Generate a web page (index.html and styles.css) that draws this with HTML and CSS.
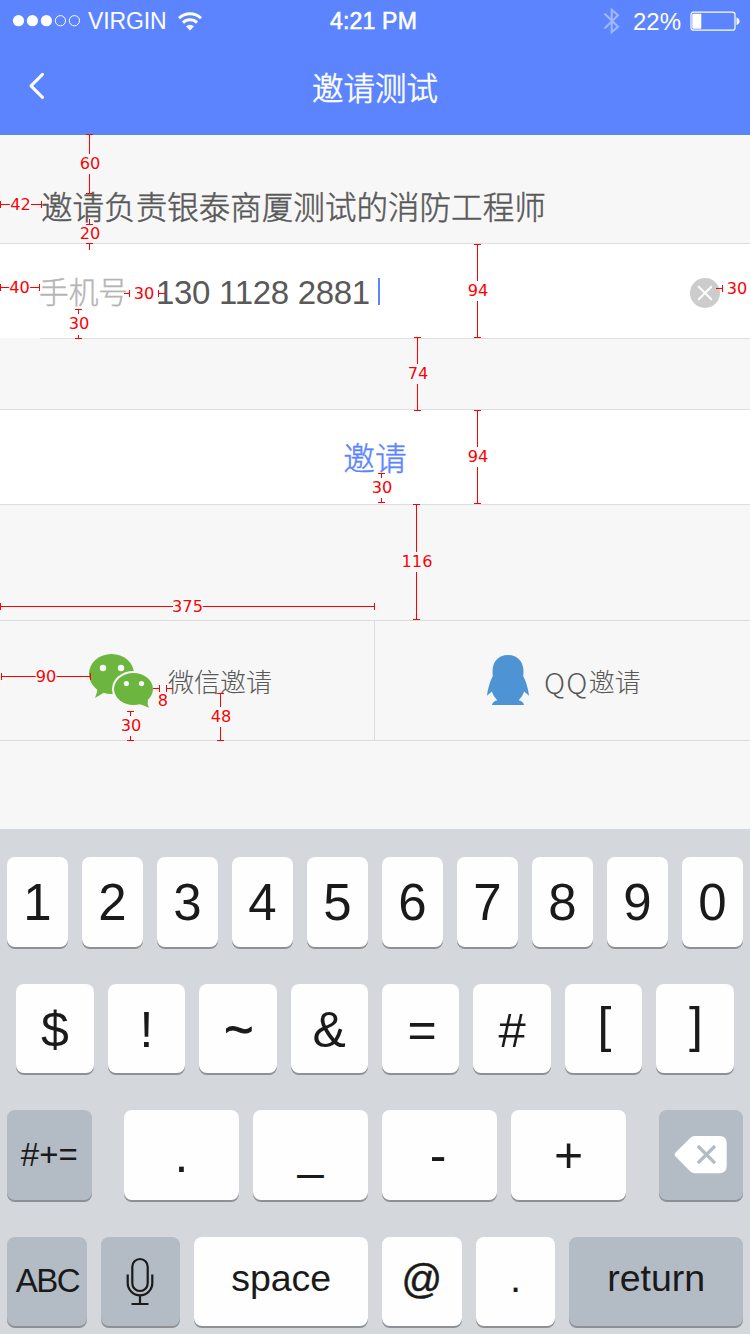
FILE: index.html
```html
<!DOCTYPE html>
<html lang="zh-CN">
<head>
<meta charset="utf-8">
<title>邀请测试</title>
<link rel="stylesheet" href="styles.css">
</head>
<body>
<main class="screen">
  <header class="header">
    <div class="status">
      <div class="status-left">
        <svg class="signal" width="70" height="14" viewBox="0 0 70 14"><g fill="#fff"><circle cx="6.5" cy="6.7" r="5.6"/><circle cx="20.4" cy="6.7" r="5.6"/><circle cx="34.4" cy="6.7" r="5.6"/></g><g fill="none" stroke="#fff"><circle cx="48.4" cy="6.7" r="5.1"/><circle cx="62.4" cy="6.7" r="5.1"/></g></svg>
        <span class="carrier">VIRGIN</span>
        <svg class="wifi" width="24" height="19" viewBox="0 0 24 19"><g fill="none" stroke="#fff" stroke-width="2.9"><path d="M1 6.2A15.8 15.8 0 0 1 23 6.2"/><path d="M5 10.6A10 10 0 0 1 19 10.6"/></g><path d="M8 14.3Q12 11.2 16 14.3L12 18.5Z" fill="#fff"/></svg>
      </div>
      <div class="clock">4:21 PM</div>
      <div class="status-right">
        <svg class="bluetooth" width="17" height="28" viewBox="0 0 17 28"><path d="M1.5 6.5L15 19.8L8.7 25.3V2.7L15 8.2L1.5 21.5" fill="none" stroke="#fff" stroke-width="2.1"/></svg>
        <span class="percent">22%</span>
        <svg class="battery" width="50" height="20" viewBox="0 0 50 20"><rect x="1" y="1.2" width="44" height="18" rx="2.5" fill="none" stroke="#fff" stroke-width="1.2"/><rect x="2.3" y="2.7" width="9" height="15" rx="1" fill="#fff"/><path d="M46.5 6.5Q49.5 7.5 49.5 10.2T46.5 14Z" fill="#fff"/></svg>
      </div>
    </div>
    <nav class="navbar">
      <svg class="back" width="18" height="28" viewBox="0 0 18 28"><path d="M14.5 2.4L3 13.9L14.5 25.4" fill="none" stroke="#fff" stroke-width="3" stroke-linecap="round" stroke-linejoin="round"/></svg>
      <h1 class="title">邀请测试</h1>
    </nav>
  </header>

  <p class="prompt">邀请负责银泰商厦测试的消防工程师</p>

  <section class="field">
    <span class="field-label">手机号</span>
    <span class="field-value">130 1128 2881</span>
    <span class="caret"></span>
    <svg class="clear" width="30" height="30" viewBox="0 0 30 30"><circle cx="15" cy="15" r="15" fill="#ccc"/><path d="M8.7 8.7L21.3 21.3M21.3 8.7L8.7 21.3" stroke="#fff" stroke-width="2" stroke-linecap="round"/></svg>
  </section>
  <div class="field-rule"></div>

  <button class="invite">邀请</button>

  <section class="share">
    <div class="share-item wechat">
      <svg width="66" height="56" viewBox="88 653 66 56">
        <g fill="#6cb53e"><ellipse cx="111.5" cy="674" rx="22.5" ry="20"/><path d="M97.5 687Q97.8 692 95 698L105 692Z"/></g>
        <ellipse cx="133.5" cy="689" rx="21.5" ry="18" fill="#f7f7f7"/>
        <g fill="#6cb53e"><ellipse cx="133.5" cy="689" rx="19.5" ry="16"/><path d="M138 704Q141 704 149 707.8Q146.8 703.5 148 699.5Z"/></g>
        <g fill="#f7f7f7"><circle cx="103" cy="668" r="3.2"/><circle cx="121" cy="668" r="3.2"/><circle cx="126.4" cy="683.6" r="2.6"/><circle cx="141.5" cy="683.6" r="2.6"/></g>
      </svg>
      <span class="share-text">微信邀请</span>
    </div>
    <div class="share-item qq">
      <svg class="penguin" width="42" height="50" viewBox="0 0 42 50"><path d="M21 0C11 0 5.6 7.5 5.6 15.5Q5.4 18.5 5.8 21Q1.2 30 0 40.8L4.8 36.5Q6.5 42 10.3 45.2Q5.5 46.5 5 50H37Q36.5 46.5 31.7 45.2Q35.5 42 37.2 36.5L42 40.8Q40.8 30 36.2 21Q36.6 18.5 36.4 15.5C36.4 7.5 31 0 21 0Z" fill="#4e94d4"/></svg>
      <span class="share-text"><span class="latin">QQ</span>邀请</span>
    </div>
  </section>

  <section class="keyboard">
    <div class="keys row-1"><b class="key">1</b><b class="key">2</b><b class="key">3</b><b class="key">4</b><b class="key">5</b><b class="key">6</b><b class="key">7</b><b class="key">8</b><b class="key">9</b><b class="key">0</b></div>
    <div class="keys row-2"><b class="key">$</b><b class="key">!</b><b class="key tilde">~</b><b class="key">&amp;</b><b class="key equals">=</b><b class="key hash">#</b><b class="key bracket">[</b><b class="key bracket">]</b></div>
    <div class="keys row-3"><b class="key dark small">#+=</b><b class="key">.</b><b class="key underscore">_</b><b class="key hyphen">-</b><b class="key">+</b><b class="key dark">
      <svg width="54" height="40" viewBox="0 0 54 40"><path d="M1.8 17.2L16.2 3Q18.2 1 21 1H45.5Q52.7 1 52.7 8.2V31Q52.7 38.2 45.5 38.2H21Q18.2 38.2 16.2 36.2L1.8 21.8Q-.4 19.5 1.8 17.2Z" fill="#fff"/><path d="M23.8 11L41 28.2M41 11L23.8 28.2" stroke="#b3bbc5" stroke-width="3.3"/></svg></b></div>
    <div class="keys row-4"><b class="key dark small abc">ABC</b><b class="key dark mic">
      <svg width="28" height="49" viewBox="0 0 28 49"><g fill="none" stroke="#1a1a1a" stroke-width="2.2"><rect x="6.3" y="2" width="15.4" height="32" rx="7.7"/><path d="M1.7 17.5V26A12.3 12.3 0 0 0 26.3 26V17.5M14 38.3V47M5.5 47H22.5"/></g></svg></b><b class="key word">space</b><b class="key at">@</b><b class="key dot">.</b><b class="key dark word">return</b></div>
  </section>

  <svg class="measures" width="750" height="1334" viewBox="0 0 750 1334">
    <path class="ticks" d="M89.500 134V154M89.500 174V193M86 134.500H93M86 193.500H93
      M89.500 219V224M86 224.500H93M86 243.500H93M89.500 244V250
      M0 204.500H10M31 204.500H41M.5 201V208M41.500 201V208
      M0 287.500H10M30 287.500H39M.5 284V291M39.500 284V291
      M124 293.500H129M129.500 290V297M158.500 290V297M159 293.500H165
      M75 309.500H82M78.500 310V314M78.500 335V338M75 338.500H82
      M474 244.500H481M477.500 244V281M477.500 301V337M474 337.500H481
      M414 337.500H421M417.500 337V364M417.500 384V410M414 410.500H421
      M474 410.500H481M477.500 410V447M477.500 467V503M474 503.500H481
      M378 473.500H385M381.500 473V478M381.500 498V502M378 502.500H385
      M413 504.500H420M416.500 504V552M416.500 572V619M413 619.500H420
      M.5 603V610M0 606.500H173M202 606.500H374M374.500 603V610
      M1.500 673V680M1 676.500H36M56 676.500H90M90.500 673V680
      M153 688.500H159M159.500 685V692M166.500 685V692M167 688.500H173
      M127 711.500H134M130.500 711V716M130.500 736V740M127 740.500H134
      M217 693.500H224M220.500 693V707M220.500 727V740M217 740.500H224
      M716 288.500H722M722.500 285V292"/>
    <g class="values">
      <text x="90" y="169">60</text><text x="90" y="239">20</text><text x="20.500" y="210">42</text><text x="19.500" y="293">40</text>
      <text x="144" y="299">30</text><text x="79" y="329">30</text><text x="478" y="296">94</text><text x="418" y="379">74</text>
      <text x="478" y="462">94</text><text x="382" y="493">30</text><text x="417" y="567">116</text><text x="187.500" y="612">375</text>
      <text x="46" y="682">90</text><text x="163" y="706">8</text><text x="131" y="731">30</text><text x="221" y="722">48</text><text x="737" y="294">30</text>
    </g>
  </svg>
</main>
</body>
</html>
```
FILE: styles.css
```css
* { box-sizing: border-box; }
body { margin: 0; }
.screen {
  position: relative;
  display: flex;
  flex-direction: column;
  width: 750px;
  height: 1334px;
  overflow: hidden;
  background: #f7f7f7;
  color: #595959;
  font-family: "Noto Sans CJK SC", sans-serif;
  font-weight: 300;
}
svg { display: block; flex: none; }

.header {
  height: 135px;
  background: #5c84ff;
  border-bottom: 1px solid #5396b8;
  color: #fff;
}
.status {
  display: grid;
  grid-template-columns: 1fr auto 1fr;
  height: 41px;
  padding: 0 10px 0 12px;
  font: 400 23px/41px "Liberation Sans", Arial, sans-serif;
}
.status-left, .status-right { display: flex; align-items: center; }
.status-right { justify-content: flex-end; }
.carrier { margin-left: 6px; letter-spacing: -.1px; padding-top: 1px; }
.wifi { margin-left: 11px; }
.clock { -webkit-text-stroke: .6px #fff; letter-spacing: .2px; padding: 1px 5px 0 0; }
.bluetooth { opacity: .42; margin-right: 13px; }
.percent { font-size: 24px; padding-top: 1px; }
.battery { margin-left: 8px; }
.percent, .bluetooth { position: relative; left: -1px; }
.navbar {
  display: grid;
  grid-template-columns: 60px 1fr 60px;
  align-items: center;
  height: 91px;
}
.back { margin: -2px 0 0 28px; }
.title {
  margin: 0;
  padding-bottom: 2px;
  text-align: center;
  font-size: 31.500px;
  line-height: 40px;
  font-weight: 300;
  -webkit-text-stroke: .6px #fff;
}

.prompt {
  margin: 0;
  height: 108px;
  padding: 50px 0 0 41px;
  font-size: 31.550px;
  line-height: 40px;
  -webkit-text-stroke: .5px #595959;
}
.field {
  display: flex;
  align-items: center;
  height: 95px;
  padding-right: 30px;
  padding-left: 39px;
  border-top: 1px solid #dedede;
  background: #fff;
}
.field-label {
  width: 117px;
  font-size: 29.700px;
  line-height: 94px;
  color: #b5b5b5;
  -webkit-text-stroke: .4px #b5b5b5;
}
.field-value {
  font: 400 33px/94px "Liberation Sans", Arial, sans-serif;
  letter-spacing: -.3px;
  padding-top: 4px;
}
.caret { width: 2px; height: 27px; margin-left: 8px; background: #5c84ff; }
.clear { margin-left: auto; margin-top: 3px; }
.field-rule { height: 1px; margin-left: 40px; background: #dedede; }
.invite {
  height: 96px;
  margin: 70px 0 115px;
  padding: 0 0 3px;
  border: solid #dedede;
  border-width: 1px 0;
  background: #fff;
  color: #5c84ff;
  font: 300 31.670px/90px "Noto Sans CJK SC", sans-serif;
  -webkit-text-stroke: .4px #5c84ff;
}
.share {
  display: grid;
  grid-template-columns: 375px 375px;
  height: 121px;
  border: solid #dcdcdc;
  border-width: 1px 0;
}
.share-item { display: flex; align-items: center; font-size: 26px; line-height: 40px; }
.wechat { padding-left: 88px; border-right: 1px solid #dcdcdc; gap: 14px; }
.qq { padding-left: 112px; gap: 15px; }
.penguin { margin-bottom: 1px; }
.share-text { display: flex; align-items: center; }
.qq .share-text { padding-top: 1px; }
.latin { font-size: 29px; letter-spacing: 1.300px; }

.keyboard {
  display: flex;
  flex-direction: column;
  gap: 36.500px;
  height: 505px;
  margin-top: 88px;
  padding: 28px 7px 0;
  background: #d4d8dd;
}
.keys { display: grid; grid-template-rows: 90px; column-gap: 14px; height: 90px; }
.row-1 { grid-template-columns: repeat(10, 61px); }
.row-2 { grid-template-columns: repeat(8, 1fr); padding: 0 9.300px; }
.row-3 { grid-template-columns: 103px repeat(4, 115px) 103px; }
.row-3 .key:first-child { width: 84.500px; }
.row-3 .key:last-child { width: 84.500px; justify-self: end; }
.row-4 { grid-template-columns: 79.700px 79.700px 173.600px 79.700px 79.700px 173.600px; }
.key {
  display: flex;
  align-items: center;
  justify-content: center;
  height: 89.500px;
  border-radius: 8px;
  background: #fefefe;
  box-shadow: 0 2px 0 #8d9196;
  color: #1a1a1a;
  font: 400 50px/56px "Liberation Sans", Arial, sans-serif;
}
.row-1 .key { font-size: 51px; padding-top: 2px; }
.row-2 .key { padding-top: 3px; }
.row-2 .tilde { -webkit-text-stroke: 1px #1a1a1a; padding-left: 2px; }
.row-2 .equals { padding-left: 3px; }
.row-2 .hash { font-size: 49px; }
.row-2 .bracket { padding: 0 0 6px 2px; }
.row-3 .underscore { font-size: 46px; padding-bottom: 3px; }
.row-3 .hyphen { padding-right: 3px; }
.dark { background: #b3bbc5; }
.key.small { font-size: 33px; }
.key.abc { letter-spacing: -1.500px; padding-left: 1px; }
.key.mic { padding: 0 2px 0 0; }
.key.word { font-size: 37.500px; padding-bottom: 7px; }
.key.at { font-size: 40px; padding-bottom: 5px; -webkit-text-stroke: .5px #1a1a1a; }
.key.dot { font-size: 40px; padding-bottom: 7px; }

.measures { position: absolute; top: 0; left: 0; }
.ticks { fill: none; stroke: #f00; stroke-width: 1; shape-rendering: crispEdges; }
.values {
  fill: #f00;
  stroke: #fff;
  stroke-width: 2.500px;
  stroke-linejoin: round;
  paint-order: stroke;
  text-anchor: middle;
  font: 400 16.200px "DejaVu Sans", sans-serif;
}
```
